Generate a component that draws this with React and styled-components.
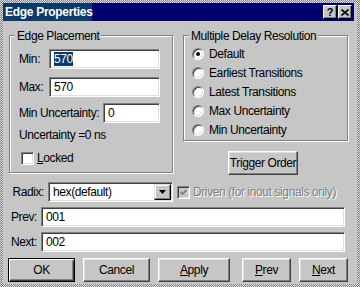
import React from 'react';
import styled, { createGlobalStyle } from 'styled-components';

const FACE = '#c6c6c6';

const GlobalStyle = createGlobalStyle`
  html, body {
    margin: 0;
    padding: 0;
    background: #fff;
  }
  body {
    font-family: 'Liberation Sans', Arial, sans-serif;
    font-size: 12px;
    letter-spacing: -0.4px;
    color: #000;
  }
`;

const Frame = styled.div`
  width: 360px;
  height: 287px;
  box-sizing: border-box;
  padding: 3px;
  background: repeating-conic-gradient(#7c7c7c 0 25%, #e4e4e4 0 50%) 0 0 / 2px 2px;
`;

const Window = styled.div`
  width: 354px;
  height: 281px;
  background: ${FACE};
  display: flex;
  flex-direction: column;
`;

const TitleBar = styled.div`
  height: 18px;
  margin-right: 3px;
  padding: 0 2px;
  display: flex;
  align-items: center;
  background: linear-gradient(to right, #0b3a6b 0 89px, #000070 89px);
`;

const Title = styled.div`
  flex: 1;
  color: #fff;
  font-weight: bold;
  letter-spacing: -0.3px;
  line-height: 18px;
`;

const CapButton = styled.div`
  width: 14px;
  height: 14px;
  box-sizing: border-box;
  margin-left: ${({ $ml }) => $ml || 0}px;
  background: ${FACE};
  border: 1px solid;
  border-color: #fff #000 #000 #fff;
  box-shadow: inset -1px -1px #808080;
  display: flex;
  align-items: center;
  justify-content: center;
  font-weight: bold;
  font-size: 11px;
  letter-spacing: 0;
  line-height: 1;
`;

const Body = styled.div`
  flex: 1;
  display: flex;
  flex-direction: column;
  padding: 14px 9px 2px 6px;
`;

const TopGrid = styled.div`
  display: grid;
  grid-template-columns: 164px 165px;
  column-gap: 10px;
  height: 140px;
  align-items: start;
`;

const Group = styled.div`
  position: relative;
  box-sizing: border-box;
  width: ${({ $w }) => $w}px;
  height: ${({ $h }) => $h}px;
  border: 1px solid #808080;
  box-shadow: inset 1px 1px #fff, 1px 1px #fff;
  padding: ${({ $pad }) => $pad};
  display: flex;
  flex-direction: column;
`;

const Legend = styled.div`
  position: absolute;
  top: -7px;
  left: 5px;
  padding: 0 2px;
  background: ${FACE};
  line-height: 14px;
`;

const FieldRow = styled.div`
  display: flex;
  align-items: center;
  height: 20px;
  margin-top: ${({ $mt }) => $mt || 0}px;
`;

const Label = styled.div`
  width: ${({ $w }) => $w}px;
  flex: none;
  box-sizing: border-box;
  text-align: ${({ $right }) => ($right ? 'right' : 'left')};
  padding-right: ${({ $right }) => ($right ? 4 : 0)}px;
`;

const TextBox = styled.div`
  width: ${({ $w }) => $w}px;
  height: 20px;
  box-sizing: border-box;
  flex: none;
  background: #fff;
  border: 1px solid;
  border-color: #808080 #fff #fff #808080;
  box-shadow: inset 1px 1px #404040, inset -1px -1px #dfdfdf;
  padding: 0 2px 0 4px;
  display: flex;
  align-items: center;
`;

const Selected = styled.span`
  background: #0b3a6b;
  color: #fff;
  line-height: 14px;
`;

const Note = styled.div`
  margin-top: 5px;
  line-height: 14px;
`;

const CheckRow = styled.div`
  display: flex;
  align-items: center;
  gap: 3px;
  margin-top: ${({ $mt }) => $mt || 0}px;
  margin-left: ${({ $ml }) => $ml || 0}px;
  color: ${({ $disabled }) => ($disabled ? '#808080' : '#000')};
  text-shadow: ${({ $disabled }) => ($disabled ? '1px 1px #fff' : 'none')};
`;

const CheckBox = styled.div`
  width: 13px;
  height: 13px;
  box-sizing: border-box;
  flex: none;
  background: ${({ $disabled }) => ($disabled ? FACE : '#fff')};
  border: 1px solid;
  border-color: #808080 #fff #fff #808080;
  box-shadow: inset 1px 1px #404040, inset -1px -1px #dfdfdf;
  display: flex;
  align-items: center;
  justify-content: center;
`;

const RadioList = styled.div`
  display: flex;
  flex-direction: column;
`;

const RadioRow = styled.div`
  display: flex;
  align-items: center;
  gap: 5px;
  height: 19px;
`;

const Radio = styled.div`
  width: 12px;
  height: 12px;
  box-sizing: border-box;
  border-radius: 50%;
  background: #fff;
  border: 1px solid;
  border-color: #808080 #fff #fff #808080;
  box-shadow: inset 1px 1px #404040, inset -1px -1px #dfdfdf;
  display: flex;
  align-items: center;
  justify-content: center;

  &::after {
    content: '';
    width: 4px;
    height: 4px;
    border-radius: 50%;
    background: #000;
    display: ${({ $on }) => ($on ? 'block' : 'none')};
  }
`;

const RightCol = styled.div`
  display: flex;
  flex-direction: column;
`;

const Button = styled.div`
  width: ${({ $w }) => $w}px;
  height: 24px;
  box-sizing: border-box;
  flex: none;
  margin-top: ${({ $mt }) => $mt || 0}px;
  margin-left: ${({ $ml }) => $ml || 0}px;
  background: ${FACE};
  border: 1px solid;
  border-color: ${({ $default }) => ($default ? '#000' : '#fff #404040 #404040 #fff')};
  box-shadow: ${({ $default }) =>
    $default
      ? 'inset 1px 1px #fff, inset -1px -1px #404040, inset -2px -2px #808080'
      : 'inset -1px -1px #808080, inset 1px 1px #dfdfdf'};
  display: flex;
  align-items: center;
  justify-content: center;
`;

const Row = styled.div`
  display: flex;
  align-items: center;
  height: ${({ $h }) => $h || 20}px;
  margin-top: ${({ $mt }) => $mt || 0}px;
  margin-left: ${({ $ml }) => $ml || 0}px;
`;

const SelectBox = styled(TextBox)`
  padding-right: 1px;
  justify-content: space-between;
`;

const DropButton = styled.div`
  width: 17px;
  height: 16px;
  box-sizing: border-box;
  background: ${FACE};
  border: 1px solid;
  border-color: #dfdfdf #000 #000 #dfdfdf;
  box-shadow: inset -1px -1px #808080, inset 1px 1px #fff;
  display: flex;
  align-items: center;
  justify-content: center;
`;

const placement = [
  { label: 'Min:', lw: 30, w: 111, value: '570', sel: true, mt: 0 },
  { label: 'Max:', lw: 30, w: 111, value: '570', mt: 8 },
  { label: 'Min Uncertainty:', lw: 84, w: 57, value: '0', mt: 6 },
];

const resolutions = [
  'Default',
  'Earliest Transitions',
  'Latest Transitions',
  'Max Uncertainty',
  'Min Uncertainty',
];

const CloseGlyph = () => (
  <svg width="8" height="7" viewBox="0 0 8 7">
    <path d="M0.5 0.5 L7.5 6.5 M7.5 0.5 L0.5 6.5" stroke="#000" strokeWidth="1.6" />
  </svg>
);

const Tick = ({ color }) => (
  <svg width="7" height="7" viewBox="0 0 7 7">
    <path d="M0.5 3 L2.5 5 L6.5 1" stroke={color} strokeWidth="1.8" fill="none" />
  </svg>
);

const App = () => {
  return (
    <>
      <GlobalStyle />
      <Frame>
        <Window>
          <TitleBar>
            <Title>Edge Properties</Title>
            <CapButton>?</CapButton>
            <CapButton $ml={1}>
              <CloseGlyph />
            </CapButton>
          </TitleBar>

          <Body>
            <TopGrid>
              <Group $w={164} $h={138} $pad="13px 0 0 9px">
                <Legend>Edge Placement</Legend>
                {placement.map((f) => (
                  <FieldRow key={f.label} $mt={f.mt}>
                    <Label $w={f.lw}>{f.label}</Label>
                    <TextBox $w={f.w}>{f.sel ? <Selected>{f.value}</Selected> : f.value}</TextBox>
                  </FieldRow>
                ))}
                <Note>Uncertainty =0 ns</Note>
                <CheckRow $mt={9} $ml={2}>
                  <CheckBox />
                  <span>
                    <u>L</u>ocked
                  </span>
                </CheckRow>
              </Group>

              <RightCol>
                <Group $w={165} $h={106} $pad="8px 0 0 8px">
                  <Legend>Multiple Delay Resolution</Legend>
                  <RadioList>
                    {resolutions.map((r, i) => (
                      <RadioRow key={r}>
                        <Radio $on={i === 0} />
                        <span>{r}</span>
                      </RadioRow>
                    ))}
                  </RadioList>
                </Group>
                <Button $w={70} $mt={10} $ml={45}>
                  Trigger Order
                </Button>
              </RightCol>
            </TopGrid>

            <Row $mt={7}>
              <Label $w={39} $right>
                Radix:
              </Label>
              <SelectBox $w={125}>
                <span>hex(default)</span>
                <DropButton>
                  <svg width="7" height="4" viewBox="0 0 7 4">
                    <polygon points="0,0 7,0 3.5,4" fill="#000" />
                  </svg>
                </DropButton>
              </SelectBox>
              <CheckRow $ml={4} $disabled>
                <CheckBox $disabled>
                  <Tick color="#808080" />
                </CheckBox>
                <span>Driven (for inout signals only)</span>
              </CheckRow>
            </Row>

            <Row $mt={5}>
              <Label $w={32} $right>
                Prev:
              </Label>
              <TextBox $w={304}>001</TextBox>
            </Row>
            <Row $mt={5}>
              <Label $w={32} $right>
                Next:
              </Label>
              <TextBox $w={304}>002</TextBox>
            </Row>

            <Row $mt={6} $h={24} $ml={-1}>
              <Button $w={67} $default>
                OK
              </Button>
              <Button $w={67} $ml={8}>
                Cancel
              </Button>
              <Button $w={72} $ml={8}>
                <span>
                  <u>A</u>pply
                </span>
              </Button>
              <Button $w={49} $ml={12}>
                <span>
                  <u>P</u>rev
                </span>
              </Button>
              <Button $w={49} $ml={8}>
                <span>
                  <u>N</u>ext
                </span>
              </Button>
            </Row>
          </Body>
        </Window>
      </Frame>
    </>
  );
};

export default App;
